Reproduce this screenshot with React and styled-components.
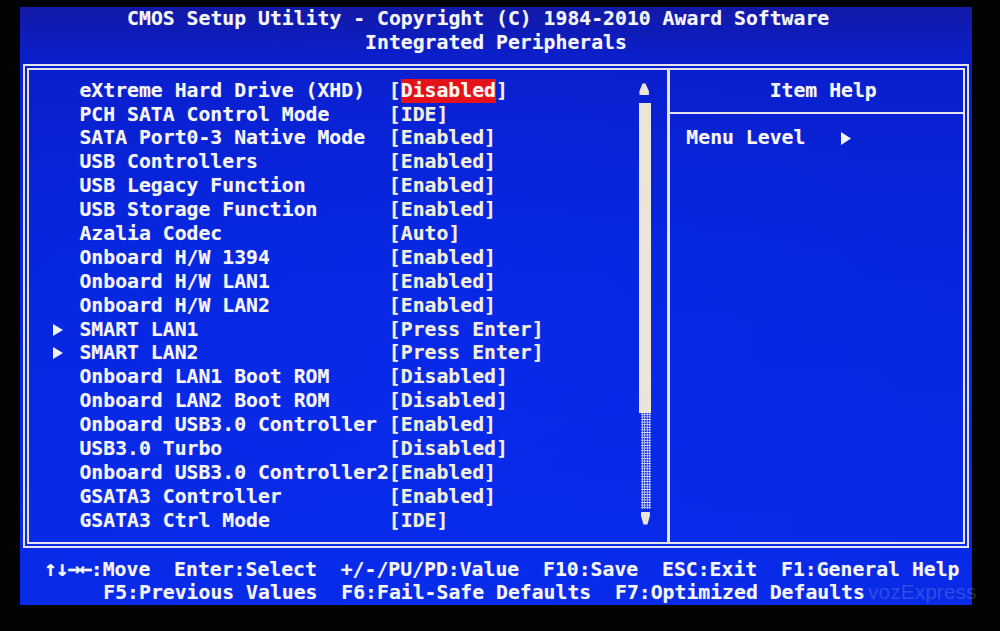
import React from 'react';
import styled, { createGlobalStyle } from 'styled-components';

const CW = 11.9;
const RH = 23.9;
const cols = (n) => `${(n * CW).toFixed(2)}px`;
const rows = (n) => `${(n * RH).toFixed(2)}px`;

const LINE = '#e6e2ee';
const LABEL = '#f5f5fa';
const VALUE = '#f3efdb';

const Global = createGlobalStyle`
  html, body { margin: 0; padding: 0; background: #000; }
  body { width: 1000px; height: 631px; overflow: hidden; }
`;

const Page = styled.div`
  position: relative;
  width: 1000px;
  height: 631px;
  box-sizing: border-box;
  padding: 7px 0 0 20px;
  background: #030304;
  overflow: hidden;
`;

const Screen = styled.main`
  width: ${cols(80)};
  height: ${rows(25)};
  display: flex;
  flex-direction: column;
  background:
    radial-gradient(ellipse at 45% 60%, rgba(10, 50, 255, 0.25), transparent 70%),
    linear-gradient(to bottom, #1219a6 0%, #0a1fcc 9%, #0725dc 40%, #082be8 100%);
  font-family: "DejaVu Sans Mono", "Liberation Mono", monospace;
  font-weight: bold;
  font-size: 19.77px;
  line-height: ${RH}px;
  color: ${LABEL};
  white-space: pre;
  text-shadow: 0 0 1px rgba(255, 255, 255, 0.35);
`;

const TextLine = styled.div`
  height: ${RH}px;
  padding-left: ${(p) => cols(p.$col || 0)};
  color: ${(p) => p.$color || LABEL};
`;

const Frame = styled.section`
  box-sizing: border-box;
  width: ${(79 * CW + 6).toFixed(2)}px;
  height: ${(20 * RH + 6).toFixed(2)}px;
  margin: ${(RH / 2 - 3).toFixed(2)}px 0 ${(RH / 2 - 3).toFixed(2)}px ${(CW / 2 - 3).toFixed(2)}px;
  border: 6px double ${LINE};
  display: flex;
`;

const LeftPanel = styled.div`
  box-sizing: border-box;
  width: ${(53.5 * CW - 3).toFixed(2)}px;
  padding: ${(RH / 2 - 3).toFixed(2)}px 0 0 ${(CW / 2 - 3).toFixed(2)}px;
  display: flex;
`;

const ItemList = styled.div`
  width: ${cols(51)};
  display: flex;
  flex-direction: column;
`;

const Row = styled.div`
  height: ${RH}px;
  display: grid;
  grid-template-columns: ${cols(2)} ${cols(2)} ${cols(26)} 1fr;
  align-items: center;
`;

const Marker = styled.svg`
  display: block;
  margin-left: -3px;
`;

const Label = styled.span`
  color: ${LABEL};
`;

const Value = styled.span`
  color: ${VALUE};
  display: flex;
  height: ${RH}px;
`;

const Selected = styled.span`
  display: inline-block;
  height: ${RH}px;
  background: #e3121b;
  color: #fff6f0;
`;

const ScrollBar = styled.div`
  width: ${cols(1)};
  display: flex;
  flex-direction: column;
`;

const ArrowCell = styled.div`
  height: ${RH}px;
  display: flex;
  align-items: flex-start;
`;

const Thumb = styled.div`
  height: ${rows(13)};
  background: #ebe5d8;
`;

const Track = styled.div`
  height: ${rows(4)};
  margin-left: 2px;
  background-image: radial-gradient(circle, #d6d8f0 0.9px, transparent 1.1px);
  background-size: 2.5px 2.6px;
`;

const Divider = styled.div`
  width: ${cols(1)};
  background: linear-gradient(
    to right,
    transparent calc(50% - 1.5px),
    ${LINE} calc(50% - 1.5px),
    ${LINE} calc(50% + 1.5px),
    transparent calc(50% + 1.5px)
  );
`;

const RightPanel = styled.div`
  flex: 1;
  box-sizing: border-box;
  padding-top: ${(RH / 2 - 3).toFixed(2)}px;
  display: flex;
  flex-direction: column;
`;

const HelpLine = styled.div`
  height: ${RH}px;
  padding-left: ${(p) => cols(p.$col || 0)};
  display: flex;
  align-items: center;
`;

const HelpRule = styled.div`
  height: ${RH}px;
  margin-left: ${(-(CW / 2 - 1.5)).toFixed(2)}px;
  background: linear-gradient(
    to bottom,
    transparent 9px,
    ${LINE} 9px,
    ${LINE} 11px,
    transparent 11px
  );
`;

const LevelArrow = styled.svg`
  display: block;
  margin-left: ${cols(3)};
`;

const KeyArrows = styled.span`
  font-size: 22px;
  letter-spacing: -1.5px;
`;

const Watermark = styled.div`
  position: absolute;
  left: 868px;
  top: 581px;
  font-family: "Liberation Sans", Arial, sans-serif;
  font-size: 21px;
  line-height: 22px;
  color: rgba(200, 200, 215, 0.22);
`;

const RightTri = () => (
  <Marker width={10} height={12} viewBox="0 0 10 12">
    <polygon points="0,0 10,6 0,12" fill="#f2f2f8" />
  </Marker>
);

const items = [
  { label: 'eXtreme Hard Drive (XHD)', value: 'Disabled', selected: true },
  { label: 'PCH SATA Control Mode', value: 'IDE' },
  { label: 'SATA Port0-3 Native Mode', value: 'Enabled' },
  { label: 'USB Controllers', value: 'Enabled' },
  { label: 'USB Legacy Function', value: 'Enabled' },
  { label: 'USB Storage Function', value: 'Enabled' },
  { label: 'Azalia Codec', value: 'Auto' },
  { label: 'Onboard H/W 1394', value: 'Enabled' },
  { label: 'Onboard H/W LAN1', value: 'Enabled' },
  { label: 'Onboard H/W LAN2', value: 'Enabled' },
  { label: 'SMART LAN1', value: 'Press Enter', sub: true },
  { label: 'SMART LAN2', value: 'Press Enter', sub: true },
  { label: 'Onboard LAN1 Boot ROM', value: 'Disabled' },
  { label: 'Onboard LAN2 Boot ROM', value: 'Disabled' },
  { label: 'Onboard USB3.0 Controller', value: 'Enabled' },
  { label: 'USB3.0 Turbo', value: 'Disabled' },
  { label: 'Onboard USB3.0 Controller2', value: 'Enabled' },
  { label: 'GSATA3 Controller', value: 'Enabled' },
  { label: 'GSATA3 Ctrl Mode', value: 'IDE' },
];

export default function App() {
  return (
    <>
      <Global />
      <Page>
        <Screen>
          <TextLine $col={9}>CMOS Setup Utility - Copyright (C) 1984-2010 Award Software</TextLine>
          <TextLine $col={29}>Integrated Peripherals</TextLine>
          <Frame>
            <LeftPanel>
              <ItemList>
                {items.map((it) => (
                  <Row key={it.label}>
                    <span />
                    <span>{it.sub ? <RightTri /> : null}</span>
                    <Label>{it.label}</Label>
                    <Value>
                      [{it.selected ? <Selected>{it.value}</Selected> : it.value}]
                    </Value>
                  </Row>
                ))}
              </ItemList>
              <ScrollBar>
                <ArrowCell>
                  <svg width="12" height="24" viewBox="0 0 12 24">
                    <polygon points="3.5,4.5 6.5,4.5 10,12 10,16 0.5,16 0.5,12" fill="#ebe5d8" />
                  </svg>
                </ArrowCell>
                <Thumb />
                <Track />
                <ArrowCell>
                  <svg width="12" height="24" viewBox="0 0 12 24">
                    <polygon points="2,3 11,3 11,7 8.5,15.5 4.5,15.5 2,7" fill="#ebe5d8" />
                  </svg>
                </ArrowCell>
              </ScrollBar>
            </LeftPanel>
            <Divider />
            <RightPanel>
              <HelpLine $col={8}>Item Help</HelpLine>
              <HelpRule />
              <HelpLine $col={1}>
                <span>Menu Level</span>
                <LevelArrow width="10" height="13" viewBox="0 0 10 13">
                  <polygon points="0,0 10,6.5 0,13" fill="#f2f2f8" />
                </LevelArrow>
              </HelpLine>
            </RightPanel>
          </Frame>
          <TextLine $col={2}><KeyArrows>↑↓→←</KeyArrows>:Move  Enter:Select  +/-/PU/PD:Value  F10:Save  ESC:Exit  F1:General Help</TextLine>
          <TextLine $col={7}>F5:Previous Values  F6:Fail-Safe Defaults  F7:Optimized Defaults</TextLine>
        </Screen>
        <Watermark>vozExpress</Watermark>
      </Page>
    </>
  );
}
